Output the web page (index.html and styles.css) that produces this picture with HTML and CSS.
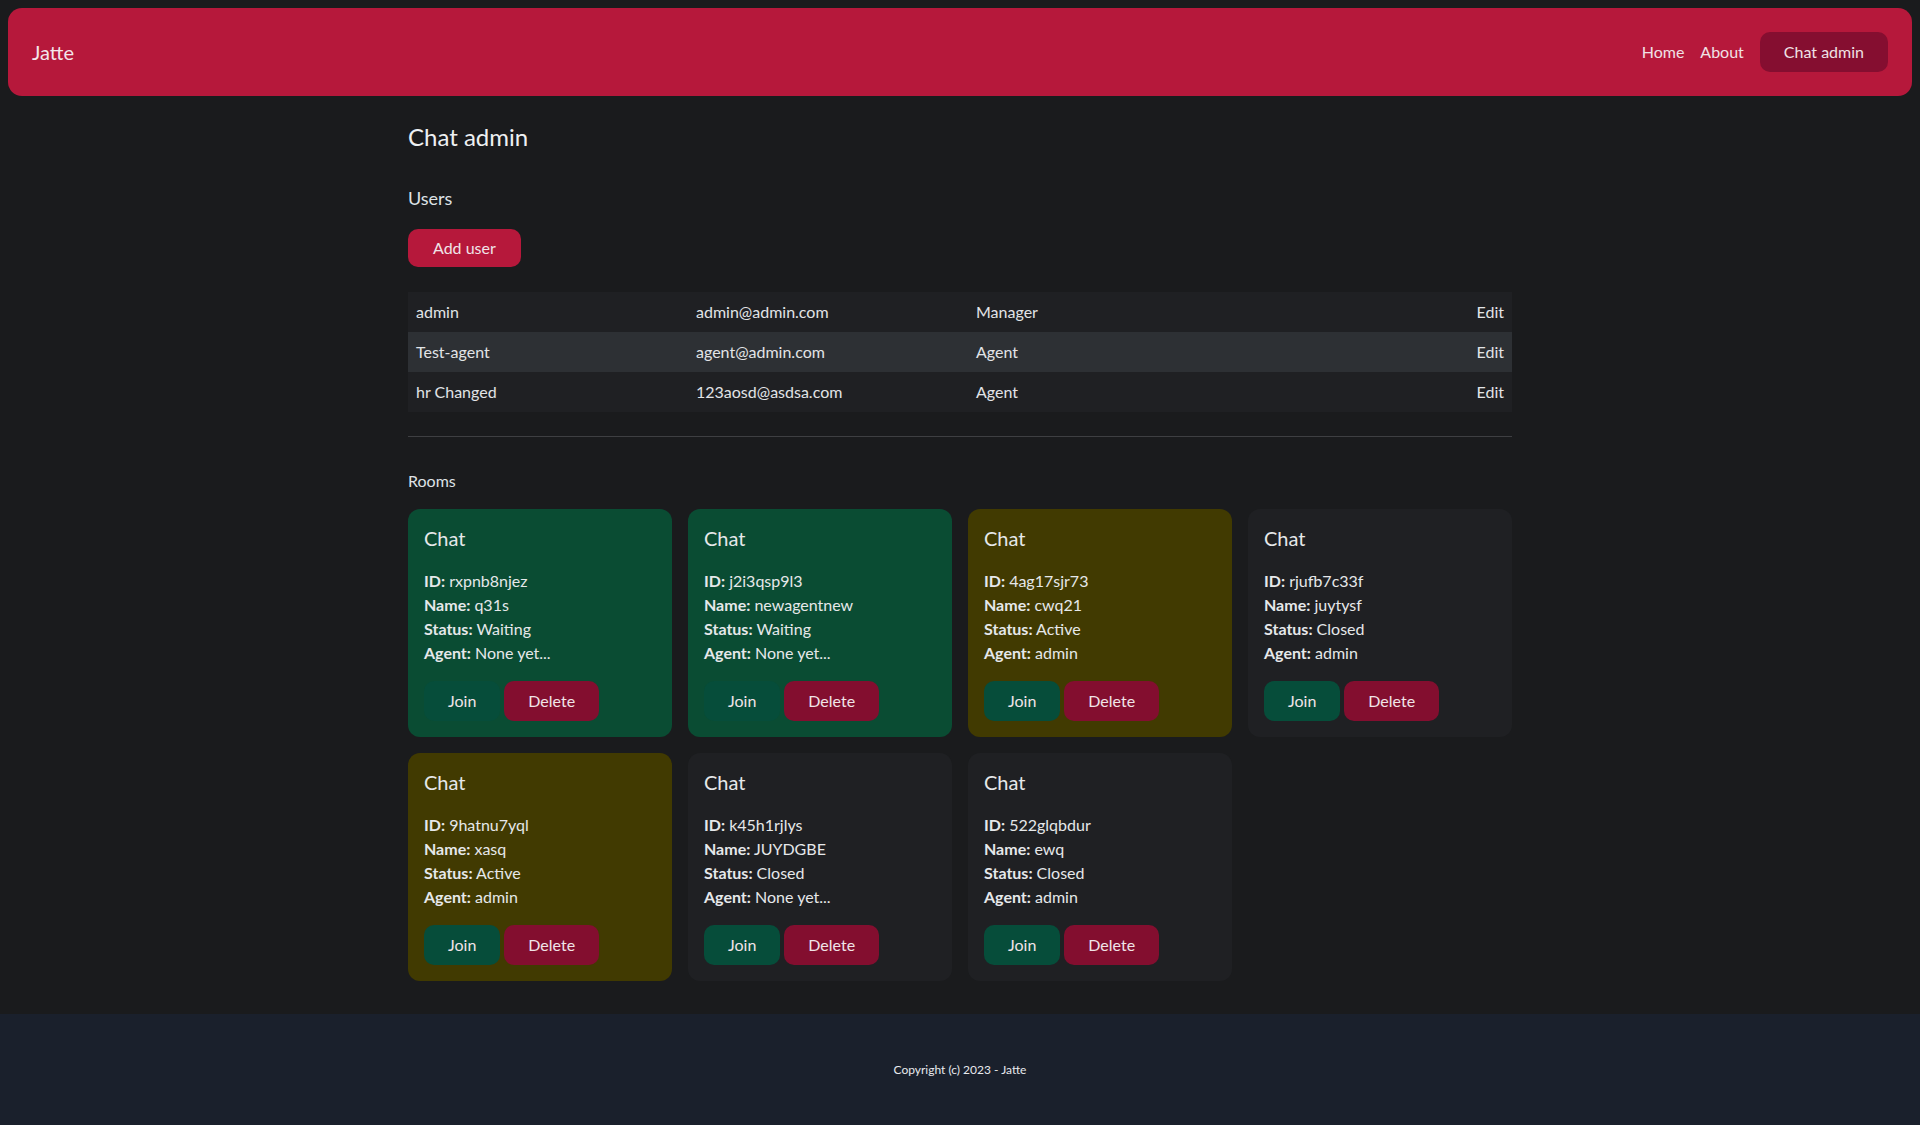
FILE: index.html
```html
<!DOCTYPE html>
<html lang="en">
<head>
<meta charset="utf-8">
<title>Jatte - Chat admin</title>
<link rel="stylesheet" href="styles.css">
</head>
<body>
<nav class="navbar">
  <a class="brand" href="#">Jatte</a>
  <div class="nav-links">
    <a class="nav-link" href="#">Home</a>
    <a class="nav-link" href="#">About</a>
    <a class="nav-btn" href="#">Chat admin</a>
  </div>
</nav>

<main class="container">
  <h1 class="page-title">Chat admin</h1>

  <h2 class="section-title">Users</h2>
  <button class="btn btn-primary">Add user</button>

  <table class="users">
    <colgroup>
      <col class="c-name"><col class="c-email"><col class="c-role"><col class="c-edit">
    </colgroup>
    <tbody>
      <tr><td>admin</td><td>admin@admin.com</td><td>Manager</td><td class="edit">Edit</td></tr>
      <tr class="alt"><td>Test-agent</td><td>agent@admin.com</td><td>Agent</td><td class="edit">Edit</td></tr>
      <tr><td>hr Changed</td><td>123aosd@asdsa.com</td><td>Agent</td><td class="edit">Edit</td></tr>
    </tbody>
  </table>

  <hr class="divider">

  <h3 class="rooms-title">Rooms</h3>

  <div class="rooms">
    <div class="card card-waiting">
      <h4 class="card-title">Chat</h4>
      <p class="line"><b>ID:</b> rxpnb8njez</p>
      <p class="line"><b>Name:</b> q31s</p>
      <p class="line"><b>Status:</b> Waiting</p>
      <p class="line"><b>Agent:</b> None yet...</p>
      <div class="actions"><button class="btn btn-join">Join</button><button class="btn btn-delete">Delete</button></div>
    </div>
    <div class="card card-waiting">
      <h4 class="card-title">Chat</h4>
      <p class="line"><b>ID:</b> j2i3qsp9l3</p>
      <p class="line"><b>Name:</b> newagentnew</p>
      <p class="line"><b>Status:</b> Waiting</p>
      <p class="line"><b>Agent:</b> None yet...</p>
      <div class="actions"><button class="btn btn-join">Join</button><button class="btn btn-delete">Delete</button></div>
    </div>
    <div class="card card-active">
      <h4 class="card-title">Chat</h4>
      <p class="line"><b>ID:</b> 4ag17sjr73</p>
      <p class="line"><b>Name:</b> cwq21</p>
      <p class="line"><b>Status:</b> Active</p>
      <p class="line"><b>Agent:</b> admin</p>
      <div class="actions"><button class="btn btn-join">Join</button><button class="btn btn-delete">Delete</button></div>
    </div>
    <div class="card card-closed">
      <h4 class="card-title">Chat</h4>
      <p class="line"><b>ID:</b> rjufb7c33f</p>
      <p class="line"><b>Name:</b> juytysf</p>
      <p class="line"><b>Status:</b> Closed</p>
      <p class="line"><b>Agent:</b> admin</p>
      <div class="actions"><button class="btn btn-join">Join</button><button class="btn btn-delete">Delete</button></div>
    </div>
    <div class="card card-active">
      <h4 class="card-title">Chat</h4>
      <p class="line"><b>ID:</b> 9hatnu7yql</p>
      <p class="line"><b>Name:</b> xasq</p>
      <p class="line"><b>Status:</b> Active</p>
      <p class="line"><b>Agent:</b> admin</p>
      <div class="actions"><button class="btn btn-join">Join</button><button class="btn btn-delete">Delete</button></div>
    </div>
    <div class="card card-closed">
      <h4 class="card-title">Chat</h4>
      <p class="line"><b>ID:</b> k45h1rjlys</p>
      <p class="line"><b>Name:</b> JUYDGBE</p>
      <p class="line"><b>Status:</b> Closed</p>
      <p class="line"><b>Agent:</b> None yet...</p>
      <div class="actions"><button class="btn btn-join">Join</button><button class="btn btn-delete">Delete</button></div>
    </div>
    <div class="card card-closed">
      <h4 class="card-title">Chat</h4>
      <p class="line"><b>ID:</b> 522glqbdur</p>
      <p class="line"><b>Name:</b> ewq</p>
      <p class="line"><b>Status:</b> Closed</p>
      <p class="line"><b>Agent:</b> admin</p>
      <div class="actions"><button class="btn btn-join">Join</button><button class="btn btn-delete">Delete</button></div>
    </div>
  </div>
</main>

<footer class="footer">
  <p>Copyright (c) 2023 - Jatte</p>
</footer>
</body>
</html>
```

FILE: styles.css
```css
* { box-sizing: border-box; }

html, body {
  margin: 0;
  padding: 0;
}

body {
  background: #1a1b1d;
  color: #dee2e6;
  font-family: Lato, "Open Sans", "Liberation Sans", sans-serif;
  font-size: 16px;
  line-height: 1.5;
}

a { text-decoration: none; color: inherit; }

/* Navbar */
.navbar {
  margin: 8px 8px 0;
  height: 88px;
  background: #b6183b;
  border-radius: 14px;
  padding: 0 24px;
  display: flex;
  align-items: center;
  justify-content: space-between;
}

.brand {
  font-size: 20px;
  color: #f3e6ea;
  line-height: 1.5;
}

.nav-links {
  display: flex;
  align-items: center;
}

.nav-link {
  padding: 0 8px;
  color: #f0e1e5;
}

.nav-btn {
  margin-left: 8px;
  background: #850e30;
  color: #f0e1e5;
  padding: 8px 24px;
  border-radius: 10px;
  line-height: 24px;
}

/* Main */
.container {
  width: 1104px;
  margin: 0 auto;
}

.page-title {
  margin: 27px 0 0;
  font-size: 24px;
  font-weight: 400;
  line-height: 1.2;
  color: #eef0f2;
}

.section-title {
  margin: 36px 0 0;
  font-size: 18px;
  font-weight: 400;
  line-height: 1.2;
}

.btn {
  border: 0;
  font-family: inherit;
  font-size: 16px;
  line-height: 24px;
  color: #f0e4e8;
  border-radius: 10px;
  padding: 8px 24px;
  cursor: pointer;
}

.btn-primary {
  display: block;
  margin-top: 20px;
  background: #b6183b;
  padding: 7px 25px;
}

/* Users table */
.users {
  width: 100%;
  margin-top: 25px;
  border-collapse: collapse;
  table-layout: fixed;
}

.c-name { width: 280px; }
.c-email { width: 280px; }
.c-edit { width: 80px; }

.users td {
  background: #1f2023;
  padding: 8px;
  height: 40px;
  line-height: 24px;
  color: #e2e4e7;
}

.users tr.alt td {
  background: #2d3034;
}

.users td.edit {
  text-align: right;
}

.divider {
  margin: 24px 0 0;
  border: 0;
  border-top: 1px solid #3e3f42;
}

.rooms-title {
  margin: 32px 0 0;
  font-size: 16px;
  font-weight: 400;
  line-height: 24px;
}

/* Rooms grid */
.rooms {
  margin-top: 16px;
  display: grid;
  grid-template-columns: repeat(4, 1fr);
  gap: 16px;
}

.card {
  border-radius: 12px;
  padding: 16px;
  background: #1f2023;
}

.card-waiting { background: #0a4c33; }
.card-active { background: #413a01; }
.card-closed { background: #1f2023; }

.card-title {
  margin: 0 0 19px;
  padding-top: 1px;
  font-size: 20px;
  font-weight: 400;
  line-height: 24px;
  color: #e6e8ea;
}

.line {
  margin: 0;
  line-height: 24px;
  color: #e6e8ea;
}

.line b { font-weight: 700; }

.actions {
  margin-top: 16px;
  display: flex;
  gap: 4px;
}

.btn-join { background: #064d3a; }
.btn-delete { background: #830e2f; }

/* Footer */
.footer {
  margin-top: 33px;
  height: 112px;
  background: #1a202c;
  display: flex;
  align-items: center;
  justify-content: center;
}

.footer p {
  margin: 0;
  font-size: 12px;
  color: #e8eaee;
}
```
